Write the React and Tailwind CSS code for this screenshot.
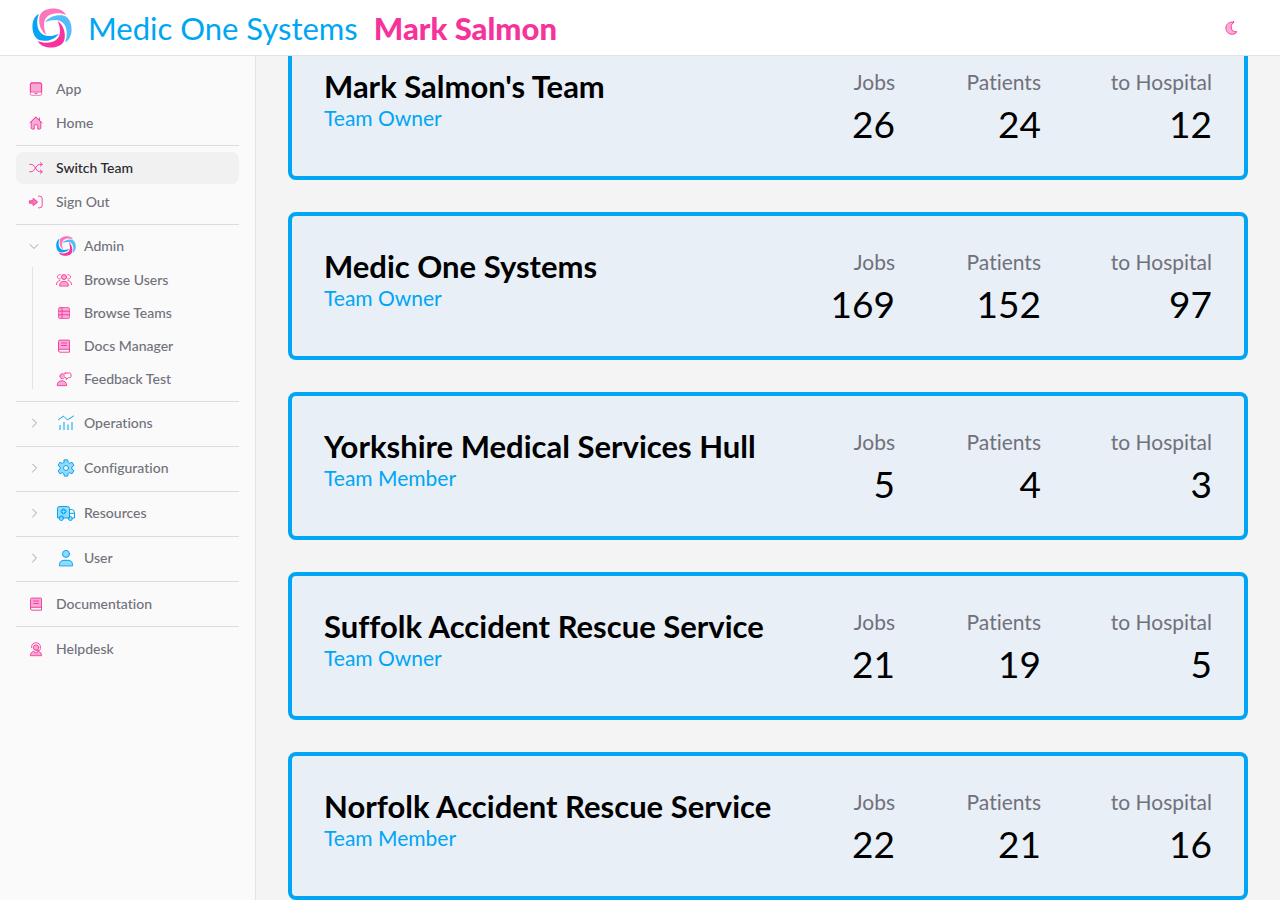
import React from "react";

const LogoBlade = ({ angle, color }) => (
  <path
    d="M-17 21C-34 10 -42 -15 -37 -36C-32 -55 -5 -61 14 -58C27 -56 37 -50 43 -39C24 -47 2 -46 -12 -36C-27 -25 -27 -2 -17 21Z"
    transform={`rotate(${angle})`}
    fill={color}
  />
);

const Logo = ({ className }) => (
  <svg viewBox="-60 -60 120 120" className={className} aria-hidden="true">
    <LogoBlade angle={0} color="#fb76bd" />
    <LogoBlade angle={90} color="#54bdf8" />
    <LogoBlade angle={180} color="#f8339f" />
    <LogoBlade angle={270} color="#05a5f5" />
  </svg>
);

const Icon = ({ children, className = "size-4 text-pink-500" }) => (
  <svg
    viewBox="0 0 16 16"
    className={`${className} shrink-0`}
    fill="none"
    stroke="currentColor"
    strokeWidth="0.9"
    strokeLinecap="round"
    strokeLinejoin="round"
    aria-hidden="true"
  >
    {children}
  </svg>
);

const tint = { fill: "currentColor", fillOpacity: 0.4 };

const TabletIcon = () => (
  <Icon>
    <rect x="2.4" y="1.9" width="11.2" height="12.4" rx="1.4" strokeOpacity="0.75" />
    <path d="M2.4 10.6V3.3Q2.4 1.9 3.8 1.9H12.2Q13.6 1.9 13.6 3.3V10.6Z" {...tint} />
    <path d="M7 12.5H9" />
  </Icon>
);

const HomeIcon = () => (
  <Icon>
    <path d="M3.2 7V13Q3.2 14.1 4.3 14.1H6.3V10.4Q6.3 9.8 6.9 9.8H9.1Q9.7 9.8 9.7 10.4V14.1H11.7Q12.8 14.1 12.8 13V7L8 2.3Z" {...tint} />
    <path d="M1.9 8L7.5 2.3Q8 1.8 8.5 2.3L14.1 8M11.5 3V5" />
  </Icon>
);

const ShuffleIcon = () => (
  <Icon>
    <path d="M1.7 4.4H3.2Q5 4.4 6.1 6L8.8 10Q9.9 11.7 11.6 11.7H14.1M1.7 11.7H3.2Q5 11.7 6.1 10L8.8 6Q9.9 4.4 11.6 4.4H14.1M12.3 2.6L14.2 4.4L12.3 6.2M12.3 9.9L14.2 11.7L12.3 13.5" />
  </Icon>
);

const SignOutIcon = () => (
  <Icon>
    <path d="M1.8 6.8H5V5Q5 4.1 5.8 4.7L9.3 7.6Q9.8 8 9.3 8.4L5.8 11.3Q5 11.9 5 11V9.2H1.8Z" fill="currentColor" fillOpacity="0.65" />
    <path d="M10.5 2.2H11.8Q14.2 2.2 14.2 4.6V11.4Q14.2 13.8 11.8 13.8H10.5" />
  </Icon>
);

const UsersIcon = () => (
  <Icon>
    <path d="M3.6 13.7C3.6 11 5 9.3 8 9.3S12.4 11 12.4 13.7Z" {...tint} />
    <circle cx="8" cy="5" r="2.5" {...tint} />
    <path d="M4.3 2.7A2.2 2.2 0 1 0 4.3 6.9M11.7 2.7A2.2 2.2 0 1 1 11.7 6.9M.5 12.7C.5 10.3 1.7 8.8 4 8.6M15.5 12.7C15.5 10.3 14.3 8.8 12 8.6" />
  </Icon>
);

const TableIcon = () => (
  <Icon>
    <rect x="2.5" y="2.5" width="11" height="11" rx="1.5" fill="currentColor" fillOpacity="0.4" strokeOpacity="0.75" />
    <path d="M6 2.5V13.5M2.5 6.2H13.5M2.5 9.8H13.5" />
  </Icon>
);

const BookIcon = () => (
  <Icon>
    <path d="M2.5 12.6V3.5Q2.5 2.1 3.9 2.1H12.7Q13.5 2.1 13.5 2.9V11.3H3.8Q2.5 11.3 2.5 12.6Z" {...tint} />
    <path d="M5.6 5H10.8M5.6 7.5H10.8M13.5 11.3V14.2H4Q2.5 14.2 2.5 12.7" />
  </Icon>
);

const FeedbackIcon = () => (
  <Icon>
    <path d="M1.2 14.2C1.2 11.4 3 9.8 5.9 9.8S10.6 11.4 10.6 14.2Z" {...tint} />
    <path d="M7.3 2.8A2.6 2.6 0 1 0 7.3 7.7" {...tint} />
    <path d="M9.4 2H13.6Q15 2 15 3.4V5.3Q15 6.7 13.6 6.7H12.3L10.2 8.5V6.7H9.4Q8 6.7 8 5.3V3.4Q8 2 9.4 2Z" />
  </Icon>
);

const HelpIcon = () => (
  <Icon>
    <path d="M2.5 14.3C2.5 11.8 4 10.7 5.8 10.4L8 12.1L10.2 10.4C12 10.7 13.5 11.8 13.5 14.3Z" {...tint} />
    <circle cx="8" cy="6.6" r="2.7" {...tint} />
    <path d="M3.6 6.5V5.8C3.6 3.4 5.4 1.8 8 1.8S12.4 3.4 12.4 5.8V7.4Q12.4 9.7 9.8 9.7H8.2" />
  </Icon>
);

const BlueIcon = ({ children }) => (
  <svg
    viewBox="0 0 20 20"
    className="size-5 shrink-0 text-[#00a6f4]"
    fill="none"
    stroke="currentColor"
    strokeLinecap="round"
    strokeLinejoin="round"
    aria-hidden="true"
  >
    {children}
  </svg>
);

const ChartIcon = () => (
  <BlueIcon>
    <path d="M2.4 6.8L7 3.4Q7.5 3.1 8 3.5L11.4 6.9L17.6 3" />
    <path d="M4 12V17M8 9V17M12 11.5V17M16 9V17" strokeWidth="1.7" strokeOpacity="0.6" strokeLinecap="butt" />
  </BlueIcon>
);

const GearIcon = () => (
  <BlueIcon>
    <path
      fillRule="evenodd"
      d="M8.3 1.9H11.7L12.2 4.5Q13 4.8 13.6 5.3L16.1 4.3L17.9 7.3L15.8 9Q16 10 15.8 11L17.9 12.7L16.1 15.7L13.6 14.7Q13 15.2 12.2 15.5L11.7 18.1H8.3L7.8 15.5Q7 15.2 6.4 14.7L3.9 15.7L2.1 12.7L4.2 11Q4 10 4.2 9L2.1 7.3L3.9 4.3L6.4 5.3Q7 4.8 7.8 4.5ZM12.5 10A2.5 2.5 0 1 0 7.5 10A2.5 2.5 0 1 0 12.5 10Z"
      {...tint}
    />
  </BlueIcon>
);

const AmbulanceIcon = () => (
  <BlueIcon>
    <path d="M3.5 3.5H11.5Q13.5 3.5 13.5 5.5V15H7.5A2.1 2.1 0 0 0 3.3 15H1.5V5.5Q1.5 3.5 3.5 3.5Z" {...tint} />
    <path d="M13.5 6.5H15.8Q18.5 6.5 18.5 10.2V15H17M13.5 10.3H18.3" />
    <circle cx="5.4" cy="15.5" r="2" {...tint} />
    <circle cx="14.4" cy="15.5" r="2" {...tint} />
    <path d="M6.6 6H8.4V7.6H10V9.4H8.4V11H6.6V9.4H5V7.6H6.6Z" />
  </BlueIcon>
);

const UserIcon = () => (
  <BlueIcon>
    <circle cx="10" cy="5.9" r="3.5" {...tint} />
    <path d="M3.5 17.5V16.6C3.5 13.8 5.5 12.3 8 12.3H12C14.5 12.3 16.5 13.8 16.5 16.6V17.5Z" {...tint} />
  </BlueIcon>
);

const MoonIcon = () => (
  <Icon>
    <path d="M9.6 1.9C5 1.6 1.9 4.2 1.9 8.1S4.9 14.3 8.2 14.3C10.4 14.3 12 13.3 12.8 11.7C9.4 12.1 7.2 10.3 7.2 7.1C7.2 4.8 8.2 3.2 10 2.4Q10.2 2 9.6 1.9Z" {...tint} />
  </Icon>
);

const Chevron = ({ open }) => (
  <svg
    viewBox="0 0 12 12"
    className="mr-4 size-3 shrink-0 text-zinc-400"
    fill="none"
    stroke="currentColor"
    aria-hidden="true"
  >
    <path d={open ? "M1.8 4.3L6 8.5L10.2 4.3" : "M4.3 1.8L8.5 6L4.3 10.2"} />
  </svg>
);

const NavLink = ({ icon, label, active }) => (
  <a
    href="#"
    aria-current={active ? "page" : undefined}
    className={`flex h-8 items-center gap-3 rounded-lg px-3 ${active ? "bg-[#f1f1f1] text-zinc-800" : "text-zinc-500"}`}
  >
    {icon}
    <span>{label}</span>
  </a>
);

const NavGroup = ({ icon, label, open }) => (
  <button type="button" aria-expanded={!!open} className="flex h-8 w-full items-center px-3 pb-0.5 text-zinc-500">
    <Chevron open={open} />
    {icon}
    <span className="ml-2">{label}</span>
  </button>
);

const Divider = () => <hr className="my-1.5 border-[#dcdcdd]" />;

const teams = [
  { name: "Mark Salmon's Team", role: "Team Owner", jobs: 26, patients: 24, hospital: 12 },
  { name: "Medic One Systems", role: "Team Owner", jobs: 169, patients: 152, hospital: 97 },
  { name: "Yorkshire Medical Services Hull", role: "Team Member", jobs: 5, patients: 4, hospital: 3 },
  { name: "Suffolk Accident Rescue Service", role: "Team Owner", jobs: 21, patients: 19, hospital: 5 },
  { name: "Norfolk Accident Rescue Service", role: "Team Member", jobs: 22, patients: 21, hospital: 16 },
];

const Stat = ({ label, value, className }) => (
  <div className={`flex flex-col items-end gap-2 ${className}`}>
    <dt className="text-[21px] leading-7 text-zinc-500">{label}</dt>
    <dd className="text-[37px] leading-10 text-black">{value}</dd>
  </div>
);

const TeamCard = ({ team }) => (
  <li className="flex justify-between rounded-lg border-4 border-[#00a6f4] bg-[#e8eff6] p-8">
    <div>
      <h2 className="text-[31px] leading-9 font-bold text-black">{team.name}</h2>
      <p className="text-[21px] leading-7 text-[#00a6f4]">{team.role}</p>
    </div>
    <dl className="flex">
      <Stat label="Jobs" value={team.jobs} className="" />
      <Stat label="Patients" value={team.patients} className="w-[146px]" />
      <Stat label="to Hospital" value={team.hospital} className="w-[171px]" />
    </dl>
  </li>
);

export default function App() {
  return (
    <div className="flex h-screen flex-col overflow-hidden bg-[#f4f4f4] font-['Lato','Liberation_Sans',sans-serif] [font-variant-ligatures:none]">
      <header className="flex h-14 shrink-0 items-center border-b border-zinc-200 bg-white px-8">
        <Logo className="size-10 shrink-0" />
        <h1 className="ml-4 flex items-center gap-4 text-[31px] leading-9">
          <span className="text-[#00a6f4]">Medic One Systems</span>
          <span className="font-black text-pink-500">Mark Salmon</span>
        </h1>
        <button type="button" aria-label="Toggle dark mode" className="ml-auto flex h-8 items-center px-2">
          <MoonIcon />
        </button>
      </header>
      <div className="flex min-h-0 flex-1">
        <nav className="w-64 shrink-0 overflow-y-auto border-r border-zinc-200 bg-[#fafafa] px-4 pt-[17px] text-sm font-medium">
          <div className="flex flex-col gap-0.5">
            <NavLink icon={<TabletIcon />} label="App" />
            <NavLink icon={<HomeIcon />} label="Home" />
          </div>
          <Divider />
          <div className="flex flex-col gap-0.5">
            <NavLink icon={<ShuffleIcon />} label="Switch Team" active />
            <NavLink icon={<SignOutIcon />} label="Sign Out" />
          </div>
          <Divider />
          <NavGroup icon={<Logo className="size-5 shrink-0" />} label="Admin" open />
          <div className="mt-px flex pl-4">
            <div className="mt-[3px] mb-1.5 w-px bg-zinc-200" />
            <div className="ml-[11px] flex flex-1 flex-col gap-px">
              <NavLink icon={<UsersIcon />} label="Browse Users" />
              <NavLink icon={<TableIcon />} label="Browse Teams" />
              <NavLink icon={<BookIcon />} label="Docs Manager" />
              <NavLink icon={<FeedbackIcon />} label="Feedback Test" />
            </div>
          </div>
          <Divider />
          <NavGroup icon={<ChartIcon />} label="Operations" />
          <Divider />
          <NavGroup icon={<GearIcon />} label="Configuration" />
          <Divider />
          <NavGroup icon={<AmbulanceIcon />} label="Resources" />
          <Divider />
          <NavGroup icon={<UserIcon />} label="User" />
          <Divider />
          <NavLink icon={<BookIcon />} label="Documentation" />
          <Divider />
          <NavLink icon={<HelpIcon />} label="Helpdesk" />
        </nav>
        <main className="min-w-0 flex-1 overflow-y-auto px-8 [scrollbar-width:none]">
          <ul className="-mt-6 flex flex-col gap-8 pb-8">
            {teams.map((team) => (
              <TeamCard key={team.name} team={team} />
            ))}
          </ul>
        </main>
      </div>
    </div>
  );
}
